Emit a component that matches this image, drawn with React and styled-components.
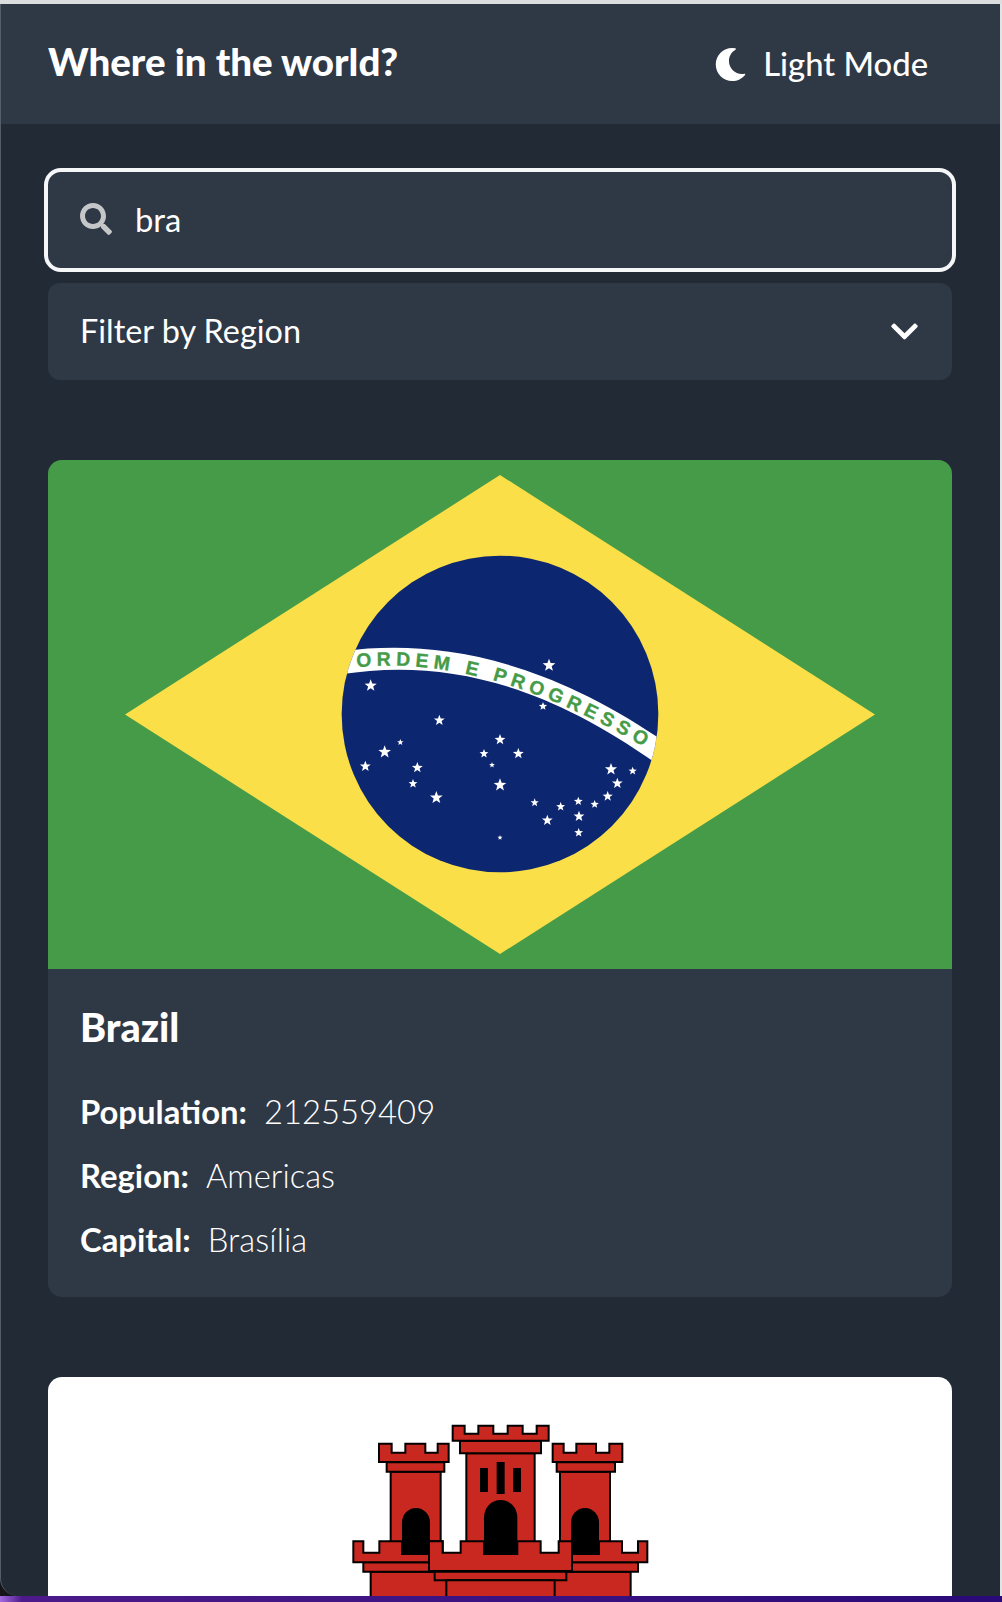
import React from 'react';
import styled, { createGlobalStyle } from 'styled-components';
import { FaMoon, FaSearch, FaChevronDown } from 'react-icons/fa';

const Global = createGlobalStyle`
  html, body { margin: 0; padding: 0; background: #e2e3e4; }
  * { box-sizing: border-box; }
`;
const FONT = `"Lato", "Noto Sans", sans-serif`;
const PANEL = '#2f3845';

const Frame = styled.div`
  width: 1002px; height: 1602px; display: flex; flex-direction: column;
  overflow: hidden; font-family: ${FONT}; color: #fff;
`;
const TopEdge = styled.div`height: 4px; flex: none; background: #dcdddf;`;
const Row = styled.div`
  flex: 1; min-height: 0; display: flex;
  background: linear-gradient(90deg, #15151a 0 30px, #e2e3e4 30px);
`;
const Screen = styled.div`
  width: 1000px; flex: none; overflow: hidden; background: #212a35;
  border-left: 1px solid #555e66; border-bottom-left-radius: 18px;
`;
const Dock = styled.div`
  height: 6px; flex: none;
  background: linear-gradient(90deg, #a46be0 0, #4c1a8a 22px, #2a0a78 100%);
`;
const Header = styled.header`
  height: 120px; background: ${PANEL}; display: flex; align-items: center;
  justify-content: space-between; padding: 0 72px 7px 47px;
`;
const Title = styled.h1`margin: 0; font-size: 38.5px; font-weight: 900;`;
const ModeButton = styled.div`
  display: flex; align-items: center; gap: 16px; margin-top: 5px; font-size: 32.8px; font-weight: 500;
  svg { font-size: 33px; margin-top: 2px; }
`;
const Main = styled.main`padding: 44px 48px 0 47px;`;
const Search = styled.div`
  height: 104px; margin: 0 -4px; border: 4px solid #f4f6f8; border-radius: 17px; background: ${PANEL};
  display: flex; align-items: center; gap: 23px; padding: 0 32px; font-size: 32.8px; font-weight: 400;
  span { margin-bottom: 2px; }
  svg { font-size: 32px; color: #c4c6c8; margin-bottom: 2px; }
`;
const Filter = styled.div`
  height: 97px; margin-top: 11px; border-radius: 12px; background: ${PANEL};
  display: flex; align-items: center; justify-content: space-between; padding: 0 32px 2px 32px; font-size: 32.4px;
  svg { font-size: 31px; margin-top: 2px; }
`;
const Card = styled.article`
  margin-top: ${p => p.$top}px; border-radius: 14px; overflow: hidden; background: ${p => p.$bg};
`;
const Flag = styled.svg`display: block; width: 904px; height: ${p => p.$h}px;`;
const Body = styled.div`padding: 38px 32px 32px; height: 328px;`;
const Name = styled.h2`margin: 0 0 32px; font-size: 39.5px; line-height: 40px; font-weight: 900;`;
const Fact = styled.p`
  margin: 0; height: 64px; display: flex; align-items: center; gap: 17px; font-size: 32.8px; font-weight: 300;
  b { font-weight: 700; }
`;

const Star = ({ x, y, r }) => {
  const pts = [];
  for (let i = 0; i < 10; i++) {
    const a = -Math.PI / 2 + (i * Math.PI) / 5;
    const q = i % 2 ? r * 0.42 : r;
    pts.push(`${(x + q * Math.cos(a)).toFixed(1)},${(y + q * Math.sin(a)).toFixed(1)}`);
  }
  return <polygon points={pts.join(' ')} fill="#fff" />;
};
const STARS = [
  [657,376,20],[122,437,19],[639,499,13],[328,541,17],[211,607,10],[510,599,17],[164,636,20],[462,641,14],[565,641,17],
  [486,675,9],[106,679,17],[262,683,17],[843,688,19],[908,693,13],[862,730,17],[249,731,14],[510,735,20],[319,773,20],
  [833,769,16],[614,788,13],[745,784,14],[794,793,13],[692,800,14],[747,829,17],[652,841,17],[746,878,14],[510,893,8],
];

const BrazilFlag = () => (
  <Flag $h={509} viewBox="0 0 904 509">
    <rect width="904" height="509" fill="#459b47" />
    <polygon points="77,254.5 452,15 827,254.5 452,494" fill="#fadf49" />
    <g transform="translate(282 80) scale(0.33333)">
      <clipPath id="globe"><circle cx="510" cy="522" r="475" /></clipPath>
      <circle cx="510" cy="522" r="475" fill="#0d2670" />
      <g clipPath="url(#globe)">
        <path d="M40 333 C280 303 600 330 1000 603 L985 675 C610 405 300 358 20 405 Z" fill="#fff" />
      </g>
      <path id="motto" d="M80 382 C340 356 620 430 965 634" fill="none" />
      <text fontFamily='"Liberation Sans", sans-serif' fontWeight="700" fontSize="58" fill="#459b47" stroke="#459b47" strokeWidth="1" letterSpacing="15.5">
        <textPath href="#motto">ORDEM E PROGRESSO</textPath>
      </text>
      {STARS.map(([x, y, r], i) => <Star key={i} x={x} y={y} r={r} />)}
    </g>
  </Flag>
);

const Tower = ({ d }) => <path d={d} fill="#c8281f" stroke="#000" strokeWidth="6" />;
const GibraltarFlag = () => (
  <Flag $h={240} viewBox="0 0 904 240">
    <g transform="translate(282 23) scale(0.33333)">
      <Tower d="M182 215H332V430H182Z" />
      <Tower d="M690 215H840V430H690Z" />
      <Tower d="M409 160H614V430H409Z" />
      <Tower d="M170 187H343V215H170Z" />
      <Tower d="M680 187H855V215H680Z" />
      <Tower d="M390 122H633V160H390Z" />
      <Tower d="M147 131H185V158H226V131H286V158H323V131H356V186H147Z" />
      <Tower d="M668 131H701V158H739V131H798V158H838V131H877V186H668Z" />
      <Tower d="M368 77H404V101H445V77H490V101H533V77H578V101H620V77H656V122H368Z" />
      <rect x="450" y="204" width="24" height="72" />
      <rect x="500" y="186" width="24" height="96" />
      <rect x="549" y="204" width="24" height="72" />
      <path d="M216 462V368a42 44 0 0 1 84 0V462Z" />
      <path d="M723 462V368a42 44 0 0 1 84 0V462Z" />
      <path d="M462 462V352a50 52 0 0 1 100 0V462Z" />
      <Tower d="M122 515H902V700H122Z" />
      <Tower d="M100 487H924V515H100Z" />
      <Tower d="M70 424H100V458H148V424H216V462H300V424H338V487H70Z" />
      <Tower d="M723 462H807V424H876V458H924V424H952V487H723Z" />
      <Tower d="M297 424H338V458H392V424H462V462H562V424H632V458H686V424H726V513H297Z" />
      <Tower d="M314 515H709V541H314Z" />
      <Tower d="M349 541H674V700H349Z" />
    </g>
  </Flag>
);

export default function App() {
  return (
    <Frame>
      <Global />
      <TopEdge />
      <Row>
        <Screen>
          <Header>
            <Title>Where in the world?</Title>
            <ModeButton><FaMoon />Light Mode</ModeButton>
          </Header>
          <Main>
            <Search><FaSearch /><span>bra</span></Search>
            <Filter>Filter by Region<FaChevronDown /></Filter>
            <Card $top={80} $bg={PANEL}>
              <BrazilFlag />
              <Body>
                <Name>Brazil</Name>
                <Fact><b>Population:</b> 212559409</Fact>
                <Fact><b>Region:</b> Americas</Fact>
                <Fact><b>Capital:</b> Brasília</Fact>
              </Body>
            </Card>
            <Card $top={80} $bg="#fff"><GibraltarFlag /></Card>
          </Main>
        </Screen>
      </Row>
      <Dock />
    </Frame>
  );
}
